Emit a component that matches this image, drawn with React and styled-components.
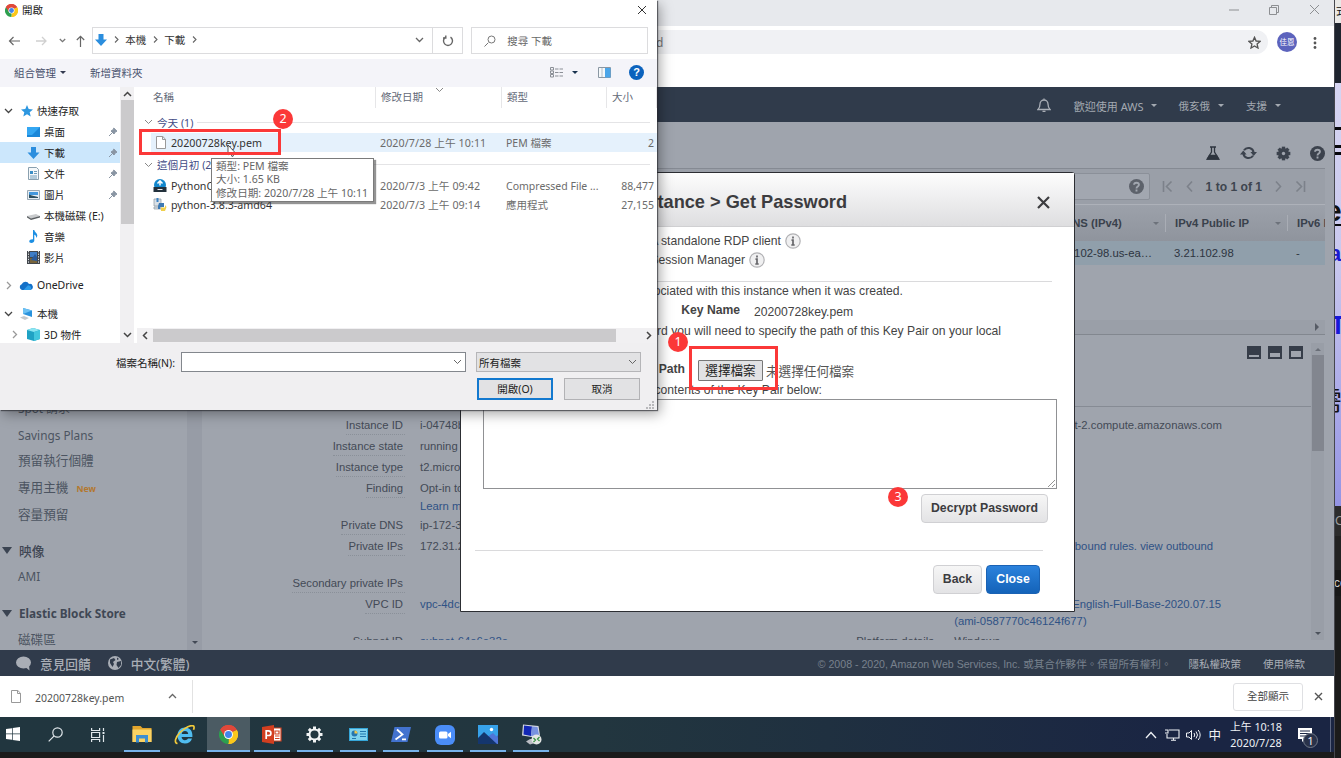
import React from "react";
import styled, { createGlobalStyle, css } from "styled-components";

const ui = '"Noto Sans", "Noto Sans CJK TC", sans-serif';
const arial = '"Liberation Sans", "Noto Sans CJK TC", sans-serif';

const Global = createGlobalStyle`
  * { box-sizing: border-box; }
  body { margin: 0; background: #1b1b1b; }
  svg { display: block; flex: none; }
`;

const Desktop = styled.div`
  position: relative;
  width: 1341px;
  height: 758px;
  overflow: hidden;
  display: flex;
  background: #1b1b1b;
  font-family: ${ui};
  font-size: 10.5px;
  color: #222;
  white-space: nowrap;
`;
const Gap = styled.div`
  flex: none;
  width: ${p => p.$w || 0}px;
  height: ${p => p.$h || 0}px;
`;
const Grow = styled.div`flex: 1;`;

/* ---------- browser window ---------- */
const Browser = styled.div`
  width: 1334px;
  height: 752px;
  flex: none;
  display: flex;
  flex-direction: column;
`;
const TitleBar = styled.div`
  height: 26px;
  background: #e7e9ed;
  display: flex;
  align-items: flex-start;
  justify-content: flex-end;
  gap: 30px;
  padding: 4px 14px 0 0;
`;
const AddressRow = styled.div`
  height: 61px;
  background: #fff;
  display: flex;
  align-items: flex-start;
  padding: 4px 13px 0 0;
`;
const AddressPill = styled.div`
  flex: 1;
  height: 24px;
  border-radius: 0 12px 12px 0;
  background: #f0f1f4;
  display: flex;
  align-items: center;
  justify-content: space-between;
  padding: 0 7px 0 656px;
  font-size: 12px;
  color: #777;
`;
const Avatar = styled.div`
  width: 20px;
  height: 20px;
  border-radius: 50%;
  margin: 2px 16px 0 9px;
  background: #5c63bd;
  color: #fff;
  font-size: 7.5px;
  line-height: 20px;
  text-align: center;
`;
const KebabBox = styled.div`padding-top: 7px;`;

const AwsNav = styled.div`
  height: 35px;
  background: #303b4b;
  display: flex;
  align-items: center;
  justify-content: flex-end;
  padding: 2px 53px 0 0;
  color: #a3a9b1;
`;
const NavItem = styled.div`
  display: flex;
  align-items: center;
  gap: ${p => p.$gap || 8}px;
  margin-left: ${p => p.$ml}px;
  font-size: ${p => p.$fs || 10.5}px;
`;
const Triangle = styled.span`
  flex: none;
  width: 0;
  height: 0;
  border: ${p => p.$s || 3.5}px solid transparent;
  border-top-color: ${p => p.$c || "#a3a9b1"};
  border-bottom-width: 0;
  ${p => p.$tall && css`border-top-width: ${p.$tall}px;`}
  ${p => p.$up && css`transform: rotate(180deg);`}
  ${p => p.$right && css`transform: rotate(-90deg);`}
`;

const Console = styled.div`
  height: 528px;
  background: #9fa4ad;
  display: flex;
`;
const AwsSide = styled.div`
  width: 187px;
  padding-top: 273px;
  display: flex;
  flex-direction: column;
  overflow: hidden;
  font-size: 11.8px;
  color: #4c5461;
`;
const SideLink = styled.div`
  flex: none;
  height: ${p => p.$h || 27}px;
  line-height: ${p => p.$h || 27}px;
  padding-left: 18px;
  font-size: ${p => (p.$cjk ? 12.6 : 11.8)}px;
`;
const NewTag = styled.span`
  margin-left: 8px;
  font-size: 8.7px;
  font-weight: 700;
  color: #b3782f;
  vertical-align: 0.5px;
`;
const SideHead = styled.div`
  flex: none;
  height: 26px;
  display: flex;
  align-items: center;
  gap: 7px;
  padding-left: 2px;
  font-size: ${p => (p.$cjk ? 12.8 : 11.75)}px;
  font-weight: ${p => (p.$cjk ? 500 : 700)};
  color: #3f4754;
`;
const SideScroll = styled.div`
  width: 15px;
  background: #979ca6;
  display: flex;
  align-items: flex-end;
  justify-content: center;
  padding-bottom: 6px;
`;
const AwsMain = styled.div`
  width: 1132px;
  padding-right: 9px;
  display: flex;
  flex-direction: column;
  font-family: ${arial};
  color: #3a414c;
`;
const ActionRow = styled.div`
  height: 46px;
  display: flex;
  justify-content: flex-end;
  align-items: center;
  padding-top: 16px;
  gap: 19px;
  color: #3c424d;
  svg:first-child { margin-right: 1px; }
`;
const FilterRow = styled.div`
  height: 36px;
  border-top: 1px solid #858a93;
  background: #9a9fa8;
  display: flex;
  align-items: center;
  justify-content: flex-end;
  padding-right: 19px;
  color: #7c818a;
`;
const FilterBox = styled.div`
  width: 300px;
  height: 27px;
  border: 1px solid #8b9099;
  border-radius: 2px;
  background: #a2a7b0;
  display: flex;
  align-items: center;
  justify-content: flex-end;
  padding-right: 5px;
  margin-right: 12px;
  color: #5d626b;
`;
const PageText = styled.span`
  margin: 0 13px 0 13px;
  font-size: 12.1px;
  font-weight: 700;
  color: #3e454f;
`;
const HeadRow = styled.div`
  height: 37px;
  border-top: 1px solid #adb1b9;
  background: linear-gradient(#9ca1aa, #8f949d);
  display: flex;
  align-items: center;
  justify-content: flex-end;
  font-size: 11.3px;
  font-weight: 700;
`;
const HeadCell = styled.div`
  width: ${p => p.$w}px;
  height: ${p => (p.$w < 50 ? 16 : 18)}px;
  overflow: hidden;
  display: flex;
  align-items: center;
  justify-content: space-between;
  padding: 0 ${p => (p.$w < 50 ? 0 : 6)}px 0 ${p => p.$pl || 9}px;
  border-left: 1px solid #a9adb5;
`;
const DataRow = styled.div`
  height: 24px;
  background: #909fab;
  display: flex;
  align-items: center;
  justify-content: flex-end;
  font-size: 11.3px;
  color: #2d3440;
`;
const DataCell = styled.div`
  width: ${p => p.$w}px;
  padding-left: ${p => p.$pl || 9}px;
  padding-right: ${p => p.$pr || 0}px;
  text-align: ${p => (p.$right ? "right" : "left")};
`;
const GridBlank = styled.div`height: 55px;`;
const GridScroll = styled.div`
  height: 15px;
  border-bottom: 1px solid #82878f;
  background: #9a9fa8;
  display: flex;
  align-items: center;
  justify-content: flex-end;
  padding-right: 4px;
`;
const Detail = styled.div`
  height: 305px;
  padding-top: 8px;
  display: flex;
`;
const DetailMain = styled.div`
  width: 1109px;
  height: 297px;
  overflow: hidden;
`;
const PaneTools = styled.div`
  height: 64px;
  border-bottom: 1px solid #868b94;
  display: flex;
  justify-content: flex-end;
  gap: 7px;
  padding: 3px 8px 0 0;
`;
const PaneIcon = styled.div`
  width: 14px;
  height: 13px;
  background: #363d49;
  padding: ${p => p.$t}px 2px 2px;
  &::after {
    content: "";
    display: block;
    height: 100%;
    background: #9fa4ad;
  }
`;
const PaneScroll = styled.div`
  width: 13px;
  height: 297px;
  background: #999ea7;
  display: flex;
  flex-direction: column;
  align-items: center;
  justify-content: space-between;
  padding: 5px 0 5px;
`;
const PaneThumb = styled.div`
  width: 12px;
  height: 96px;
  background: #82868f;
  margin: 4px 0 auto;
`;
const Columns = styled.div`
  display: flex;
  padding-top: 8px;
  font-size: 11.3px;
  color: #434a56;
`;
const Column = styled.div`width: ${p => p.$w}px;`;
const Field = styled.div`
  height: ${p => p.$h || 21}px;
  line-height: ${p => p.$h || 21}px;
  display: flex;
`;
const Label = styled.div`
  width: ${p => p.$w}px;
  display: flex;
  justify-content: flex-end;
  span { border-bottom: 1px dotted #8a9099; height: 20px; padding-right: 2px; margin-right: -2px; }
`;
const Value = styled.div`
  padding-left: 17px;
  color: ${p => (p.$link ? "#2f5285" : "inherit")};
`;
const EndText = styled.div`
  width: ${p => p.$w}px;
  text-align: right;
  color: ${p => (p.$link ? "#2f5285" : "inherit")};
`;

const AwsFooter = styled.div`
  height: 26px;
  background: #303b4b;
  display: flex;
  align-items: center;
  padding: 0 29px 0 16px;
  color: #a9aeb6;
`;
const FootStrong = styled.span`
  margin: 0 17px 0 9px;
  font-size: 12.7px;
  font-weight: 500;
`;
const Copyright = styled.span`
  color: #78818d;
  font-family: ${arial};
  font-size: 10.6px;
`;
const FootLink = styled.span`margin-left: ${p => p.$ml}px;`;

const Downloads = styled.div`
  height: 41px;
  background: #fff;
  display: flex;
  align-items: center;
  padding-right: 11px;
`;
const DownloadItem = styled.div`
  width: 193px;
  height: 33px;
  display: flex;
  align-items: center;
  padding: 3px 15px 0 11px;
  border-right: 1px solid #e2e2e2;
  color: #555;
  svg:first-child { margin: -4px 14px 0 0; }
  svg:last-child { margin: -4px 0 0 auto; }
`;
const ShowAll = styled.div`
  width: 70px;
  height: 28px;
  margin-right: 11px;
  border: 1px solid #dfe0e3;
  border-radius: 3px;
  line-height: 25px;
  text-align: center;
  color: #444;
`;

const Taskbar = styled.div`
  height: 35px;
  display: flex;
  background: linear-gradient(90deg, #21363f 0%, #22363f 45%, #1f3040 62%, #1a2543 88%);
`;
const StartCell = styled.div`
  width: 33.4px;
  padding: 10px 0 0 6px;
`;
const Task = styled.div`
  width: 43.3px;
  display: flex;
  flex-direction: column;
  align-items: center;
  justify-content: space-between;
  background: ${p => (p.$active ? "#4b5b63" : "transparent")};
  &::after {
    content: "";
    width: ${p => (p.$active ? 43 : 36)}px;
    height: 2px;
    background: ${p => (p.$open ? "#76b2ea" : "transparent")};
  }
`;
const TaskIcon = styled.div`
  height: 33px;
  padding-top: 2px;
  display: flex;
  align-items: center;
`;
const Tray = styled.div`
  margin-left: auto;
  display: flex;
  align-items: center;
  color: #eef1f5;
`;
const Ime = styled.span`font-size: 12.5px; margin: 0 8px 0 7px;`;
const Clock = styled.div`
  width: 54px;
  font-size: 10.8px;
  line-height: 16px;
  text-align: center;
  margin-right: 15px;
`;
const NoticeCount = styled.div`
  position: absolute;
  right: -6px;
  bottom: -6px;
  width: 15px;
  height: 15px;
  border-radius: 50%;
  border: 1px solid #707887;
  background: #29324a;
  font-size: 11.5px;
  line-height: 13px;
  text-align: center;
`;
const NoticeBox = styled.div`position: relative; margin-right: 18px;`;
const ShowDesktop = styled.div`width: 4px; height: 35px; border-left: 1px solid #5b6580;`;

/* ---------- slice of the window behind ---------- */
const Behind = styled.div`
  width: 7px;
  height: 758px;
  overflow: hidden;
  border-left: 1px solid #45464d;
  display: flex;
  flex-direction: column;
  background: linear-gradient(#d6d5f2 83px, #c9c8ee 260px, #9494e4 505px);
`;
const Piece = styled.div`
  flex: none;
  height: ${p => p.$h}px;
  background: ${p => p.$bg || "transparent"};
  color: ${p => p.$c || "#111"};
  font: ${p => p.$f || "12px"} ${arial};
  line-height: ${p => p.$h}px;
  text-indent: ${p => p.$i || 0}px;
  overflow: hidden;
`;

/* ---------- get password modal ---------- */
const Modal = styled.div`
  position: absolute;
  left: 460px;
  top: 172px;
  width: 615px;
  height: 440px;
  border: 1px solid #2c2e33;
  border-radius: 3px 3px 0 0;
  background: #fff;
  font-family: ${arial};
  font-size: 12.17px;
  color: #444;
  display: flex;
  flex-direction: column;
`;
const ModalHead = styled.div`
  flex: none;
  height: 54px;
  background: linear-gradient(#fdfdfd, #dedee0);
  border-bottom: 1px solid #d0d0d2;
  display: flex;
  align-items: center;
  padding: 5px 24px 0 0;
  font-size: 18.2px;
  font-weight: 700;
  color: #3c3c3f;
  justify-content: space-between;
`;
const ModalTitle = styled.div`width: 386px; text-align: right;`;
const Line = styled.div`
  flex: none;
  height: ${p => p.$h}px;
  line-height: ${p => p.$h}px;
  width: ${p => p.$end}px;
  display: flex;
  align-items: center;
  justify-content: flex-end;
`;
const InfoIcon = styled.svg`margin: -1px 0 0 4px;`;
const Rule = styled.div`
  flex: none;
  height: 1px;
  margin: 0 ${p => p.$r}px 0 14px;
  background: #dadadc;
`;
const FormRow = styled.div`
  flex: none;
  height: ${p => p.$h}px;
  display: flex;
  align-items: center;
`;
const FormLabel = styled.div`
  width: ${p => p.$w}px;
  text-align: right;
  font-weight: 700;
  margin-top: -3px;
`;
const FileButton = styled.div`
  width: 65px;
  height: 21px;
  margin: 0 3px 0 13px;
  border: 1px solid #777;
  border-radius: 1px;
  background: #e2e2e4;
  color: #222;
  text-align: center;
  line-height: 20px;
  font-size: 12.6px;
`;
const FileNone = styled.span`font-size: 12.6px; color: #555;`;
const TextArea = styled.div`
  flex: none;
  width: 574px;
  height: 90px;
  margin-left: 22px;
  border: 1px solid #909194;
  display: flex;
  align-items: flex-end;
  justify-content: flex-end;
`;
const ButtonRow = styled.div`
  flex: none;
  display: flex;
  justify-content: flex-end;
  gap: 4px;
  padding-right: ${p => p.$r}px;
`;
const AwsButton = styled.div`
  width: ${p => p.$w}px;
  height: 29px;
  border-radius: 4px;
  border: 1px solid ${p => (p.$primary ? "#1a62b4" : "#d0d0d3")};
  background: ${p => (p.$primary ? "linear-gradient(#2b82dc, #1463b9)" : "linear-gradient(#f6f6f6, #e3e3e5)")};
  color: ${p => (p.$primary ? "#fff" : "#3c3c3f")};
  font-weight: 700;
  font-size: 12.27px;
  line-height: 27px;
  text-align: center;
`;

/* ---------- file open dialog ---------- */
const Dialog = styled.div`
  position: absolute;
  left: 0;
  top: 0;
  width: 657px;
  height: 410px;
  background: #fff;
  box-shadow: 1px 1px 1px rgba(40, 42, 48, 0.65), 3px 4px 12px rgba(0, 0, 0, 0.35);
  display: flex;
  flex-direction: column;
`;
const DialogTitle = styled.div`
  height: 26px;
  display: flex;
  align-items: flex-start;
  justify-content: space-between;
  padding: 2px 10px 0 5px;
  color: #222;
`;
const TitleLabel = styled.div`
  display: flex;
  align-items: center;
  gap: 4px;
  height: 16px;
  span { margin-top: -1px; }
`;
const NavRow = styled.div`
  height: 33px;
  display: flex;
  padding: 1px 9px 5px 8px;
`;
const NavArrows = styled.div`
  width: 84px;
  display: flex;
  align-items: center;
`;
const PathBox = styled.div`
  width: 342px;
  border: 1px solid #dcdcde;
  display: flex;
  align-items: center;
  padding: 0 8px 2px 2px;
  color: #333;
  svg + span, span + svg { margin-left: 6.5px; }
`;
const RefreshBox = styled.div`
  width: 30px;
  border: 1px solid #dcdcde;
  border-left: 0;
  display: flex;
  align-items: center;
  justify-content: center;
`;
const SearchBox = styled.div`
  width: 177px;
  margin-left: 8px;
  border: 1px solid #dcdcde;
  display: flex;
  align-items: center;
  gap: 11px;
  padding-left: 12px;
  color: #686868;
`;
const ToolRow = styled.div`
  height: 28px;
  background: #f4f4f9;
  display: flex;
  align-items: center;
  padding: 0 13px 2px 14px;
  color: #47506c;
`;
const HelpDot = styled.div`
  width: 15px;
  height: 15px;
  border-radius: 50%;
  background: #0b62bd;
  color: #fff;
  font: 700 11px/15px ${arial};
  text-align: center;
`;
const DialogBody = styled.div`
  height: 256px;
  display: flex;
`;
const Tree = styled.div`
  width: 120px;
  padding-top: 13px;
  overflow: hidden;
`;
const TreeRow = styled.div`
  height: 21px;
  display: flex;
  align-items: center;
  padding: 0 2px 0 ${p => p.$pl}px;
  background: ${p => (p.$on ? "#cce7fc" : "transparent")};
  color: #222;
  span { margin: -1px 0 0 4px; }
  svg:last-child:not(:first-child) { margin-left: auto; }
`;
const Chev = styled.div`width: ${p => p.$w}px; display: flex;`;
const VScroll = styled.div`
  width: 14px;
  background: #f1f0f2;
  display: flex;
  flex-direction: column;
  align-items: center;
  justify-content: space-between;
  padding: 4px 0 5px;
`;
const VThumb = styled.div`
  width: 13px;
  height: 124px;
  margin: 3px 0 auto;
  background: #cbcacc;
`;
const List = styled.div`
  width: 520px;
  margin-left: 3px;
  display: flex;
  flex-direction: column;
`;
const ListHead = styled.div`
  height: 21px;
  display: flex;
  color: #646a78;
`;
const ColHead = styled.div`
  width: ${p => p.$w}px;
  padding-left: ${p => p.$pl || 5}px;
  line-height: 20px;
  border-right: 1px solid #e6e6e8;
  display: flex;
`;
const SortMark = styled.div`padding: 0 0 0 12px;`;
const Group = styled.div`
  height: ${p => p.$h}px;
  display: flex;
  align-items: center;
  padding: 0 7px 0 7px;
  gap: 4px;
  color: #424c86;
  font-size: 10.6px;
  &::after { content: ""; flex: 1; height: 1px; background: #e4e4e6; }
`;
const FileRow = styled.div`
  height: 19px;
  margin-left: 14px;
  padding-left: 2px;
  display: flex;
  align-items: center;
  background: ${p => (p.$on ? "#e5f1fc" : "transparent")};
  color: #6b6b6b;
`;
const FileName = styled.div`
  width: 227px;
  display: flex;
  align-items: center;
  gap: 4px;
  font-size: 10.7px;
  color: #333;
`;
const DocSlot = styled.div`margin: 0 1px 0 3px;`;
const FileCell = styled.div`
  width: ${p => p.$w}px;
  text-align: ${p => (p.$right ? "right" : "left")};
  ${p => p.$date && css`font-size: 10.7px; letter-spacing: 0.07px;`}
`;
const HScroll = styled.div`
  height: 15px;
  margin-top: auto;
  background: #f1f0f2;
  display: flex;
  align-items: center;
  padding: 0 5px;
`;
const HThumb = styled.div`
  width: 463px;
  height: 13px;
  margin: 0 auto 0 5px;
  background: #cbcacc;
`;
const DialogFoot = styled.div`
  flex: 1;
  background: #f0eff1;
  padding: 9px 3px 0 0;
`;
const FootLine = styled.div`
  display: flex;
  align-items: center;
  justify-content: flex-end;
  padding-right: ${p => p.$r}px;
  margin-bottom: ${p => p.$mb || 0}px;
`;
const Combo = styled.div`
  width: ${p => p.$w}px;
  height: 20px;
  margin-left: ${p => p.$ml}px;
  border: 1px solid ${p => (p.$grey ? "#b5b5b8" : "#83878d")};
  background: ${p => (p.$grey ? "#e2e2e4" : "#fff")};
  display: flex;
  align-items: center;
  justify-content: space-between;
  padding: 0 3px 0 2px;
`;
const DlgButton = styled.div`
  width: 76px;
  height: 22px;
  margin-left: 11px;
  border: ${p => (p.$main ? "2px solid #1379cf" : "1px solid #b2b2b5")};
  background: #e2e2e4;
  text-align: center;
  line-height: ${p => (p.$main ? 18 : 20)}px;
`;
const GripLine = styled.div`display: flex; justify-content: flex-end;`;
const Tooltip = styled.div`
  position: absolute;
  left: 211px;
  top: 158px;
  width: 163px;
  height: 44px;
  padding: 1px 4px;
  border: 1px solid #7b7b7b;
  box-shadow: 2px 2px 1px rgba(60, 60, 60, 0.55);
  background: #fff;
  font-size: 10.6px;
  line-height: 13.3px;
  color: #666;
`;
const Pointer = styled.div`position: absolute; left: 227px; top: 144px;`;

/* ---------- annotations ---------- */
const Mark = styled.div`
  position: absolute;
  left: ${p => p.$x}px;
  top: ${p => p.$y}px;
  width: ${p => p.$w}px;
  height: ${p => p.$h}px;
  border: 3px solid #fb3838;
`;
const Badge = styled.div`
  position: absolute;
  left: ${p => p.$x}px;
  top: ${p => p.$y}px;
  width: 20px;
  height: 20px;
  border-radius: 50%;
  background: #fb3838;
  color: #fff;
  font: 12.5px/20px ${ui};
  text-align: center;
`;

/* ---------- icons ---------- */
const Stroke = ({ w = 10, h = 10, d, c = "#555", s = 1.3 }) => (
  <svg width={w} height={h} viewBox={`0 0 ${w} ${h}`} fill="none" stroke={c} strokeWidth={s}><path d={d} /></svg>
);
const Down = p => <Stroke w={9} h={6} d="M1 1 4.5 4.5 8 1" {...p} />;
const Up = p => <Stroke w={9} h={6} d="M1 5 4.5 1.5 8 5" {...p} />;
const Right = p => <Stroke w={6} h={9} d="M1 1 4.5 4.5 1 8" {...p} />;
const Left = p => <Stroke w={6} h={9} d="M5 1 1.5 4.5 5 8" {...p} />;
const Crumb = () => <Stroke w={5} h={9} c="#666" d="M1 1.500 4 4.500 1 7.500" s={1.1} />;
const Cross = ({ z = 11, ...p }) => <Stroke w={z} h={z} d={`M1 1 ${z - 1} ${z - 1}M${z - 1} 1 1 ${z - 1}`} {...p} />;
const Info = () => (
  <InfoIcon width="16" height="16" viewBox="0 0 16 16">
    <circle cx="8" cy="8" r="7.200" fill="#f0f0f1" stroke="#b2b2b5" strokeWidth="1.200" />
    <path d="M8 3.500v2M6.500 7.200H8v4.300M6.300 12h3.400" fill="none" stroke="#66666a" strokeWidth="1.700" />
  </InfoIcon>
);

const Chrome = ({ z }) => (
  <svg width={z} height={z} viewBox="0 0 24 24">
    <path d="M12 12 1.6 6A12 12 0 0 1 22.4 6Z" fill="#e0483a" />
    <path d="M12 12 22.4 6A12 12 0 0 1 12 24Z" fill="#fbc71b" />
    <path d="M12 12 12 24A12 12 0 0 1 1.6 6Z" fill="#2d9f4f" />
    <path d="M12 6.5H22.6A12 12 0 0 0 1.6 6L7.3 14.7Z" fill="#e0483a" />
    <path d="M16.8 9.3 22.7 6.5A12 12 0 0 1 11.6 24L16.8 14.7Z" fill="#fbc71b" />
    <circle cx="12" cy="12" r="5.6" fill="#fff" />
    <circle cx="12" cy="12" r="4.4" fill="#4385ea" />
  </svg>
);
const BlueDown = () => (
  <svg width="12" height="12" viewBox="0 0 12 12"><path d="M3.5 0h5v5.5H12L6 12 0 5.5h3.5Z" fill="#2b8ede" /></svg>
);
const Doc = ({ w = 10, h = 13 }) => (
  <svg width={w} height={h} viewBox="0 0 10 13" fill="#fff" stroke="#999"><path d="M.5.5h6.300l2.700 2.700v9.300h-9Z M6.500.5v3h3" /></svg>
);
const Pin = () => (
  <svg width="10" height="10" viewBox="0 0 10 10" fill="#8995a3" stroke="#8995a3"><path d="M5.800 1 9 4.200 7.500 4.700 6 7 3 4 5.300 2.500ZM4 6 1 9" /></svg>
);
const treeIcons = {
  star: <svg width="12" height="12" viewBox="0 0 12 12"><path d="M6 0 7.700 4 12 4.400 8.700 7.200 9.700 11.600 6 9.300 2.300 11.600 3.300 7.200 0 4.400 4.300 4Z" fill="#2d97e0" /></svg>,
  desk: <svg width="13" height="10" viewBox="0 0 13 10"><path d="M0 0h13v10H0Z" fill="#1b87d8" /><path d="M0 0h13L5 8H0Z" fill="#35a7f2" /></svg>,
  down: <svg width="13" height="12" viewBox="0 0 13 12"><path d="M4 0h5v5.500h3.500L6.500 12 .500 5.500H4Z" fill="#2b8ede" /></svg>,
  doc: <svg width="13" height="13" viewBox="0 0 13 13"><path d="M1.500.5h8l2 2v10h-10Z" fill="#f5f8fa" stroke="#8aa0af" /><path d="M3 4h3v3H3Z" fill="#3b8ec6" /><path d="M7 4.500h3M7 6.500h3M3 9h7M3 11h7" stroke="#6f9cba" /></svg>,
  pic: <svg width="13" height="10" viewBox="0 0 13 10"><path d="M.5.5h12v9H.5Z" fill="#e6eef4" stroke="#9aa9b4" /><path d="M2 2h9v3H2Z" fill="#4398dd" /><path d="M2 8V4.500l3 1 6 1.500v1Z" fill="#2d4f5f" /></svg>,
  disk: <svg width="13" height="8" viewBox="0 0 13 8"><path d="M0 4 9 2l4 2-9 3Z" fill="#c9cbcd" /><path d="M0 4v1.500L4 8l9-2.500V4L4 6.500Z" fill="#5b5f62" /></svg>,
  note: <svg width="13" height="13" viewBox="0 0 13 13"><path d="M6 0h1.300c.3 2.300 3 3 3 5.500 0 1-.4 1.800-1 2.500.2-2-1-3-2-3.300V10.500C7.300 12 6 13 4.500 13S2 12.200 2.300 11 4.500 9 6 9.400Z" fill="#1c8fe3" /></svg>,
  film: <svg width="13" height="13" viewBox="0 0 13 13"><path d="M0 0h13v13H0Z" fill="#42474d" /><path d="M3 1h7v5H3Z" fill="#3f7ec7" /><path d="M3 7h7v5H3Z" fill="#77633a" /><path d="M4 9 8 3l2 3v4Z" fill="#2b5c9c" /><path d="M1.500 0v13M11.500 0v13" stroke="#dfe3e6" strokeDasharray="1.300 1.300" /></svg>,
  cloud: <svg width="14" height="9" viewBox="0 0 14 9"><path d="M3 9a3 3 0 0 1-.3-5.700A4 4 0 0 1 10 3a3 3 0 0 1 1.500 6Z" fill="#1370c8" /><path d="M4.500 9 9 4.200A3 3 0 0 1 11.500 9Z" fill="#2d9cea" /></svg>,
  pc: <svg width="13" height="12" viewBox="0 0 13 12"><path d="M3 0l9 2.500V9L3 6Z" fill="#2a93dd" /><path d="M3 0l9 2.500L3 6Z" fill="#6cc1f3" /><path d="M0 9.500 4 8l5 2-4 2Z" fill="#c4c9cd" /></svg>,
  cube: <svg width="13" height="13" viewBox="0 0 13 13"><path d="M0 2 6 0l7 2v9l-6 2-7-2Z" fill="#1fa2c4" /><path d="M0 2 6 0l7 2-6 2Z" fill="#8be6f2" /><path d="M7 4l6-2v9l-6 2Z" fill="#42c6dd" /></svg>
};
const Question = ({ z = 15, bg = "#9a9fa8" }) => (
  <svg width={z} height={z} viewBox="0 0 16 16"><circle cx="8" cy="8" r="8" fill="currentColor" /><path d="M5.400 6.200C5.400 3.200 10.600 3.200 10.600 6.200 10.600 8 8 8 8 10M8 11.200v2" fill="none" stroke={bg} strokeWidth="2" /></svg>
);
const Flask = () => (
  <svg width="14" height="14" viewBox="0 0 14 14" fill="none" stroke="#2e353f" strokeWidth="1.300"><path d="M4 1h6M5.500 1v5L1.200 13h11.600L8.500 6V1" /><path d="M3.500 9.500h7l2 3.500h-11Z" fill="#2e353f" /></svg>
);
const Refresh = () => (
  <svg width="17" height="14" viewBox="0 0 17 14"><path d="M4 4.200A5.300 5.300 0 0 1 13.600 6.500M13 9.800A5.300 5.300 0 0 1 3.400 7.500" fill="none" stroke="#3c434e" strokeWidth="2" /><path d="M0 8.500 3.300 4.500 6.600 8.500ZM10.400 6 13.700 10l3.300-4Z" fill="#3c434e" /></svg>
);
const Gear = () => (
  <svg width="15" height="15" viewBox="-8 -8 16 16"><g fill="#3c434e"><circle r="5.800" />{[0, 45, 90, 135].map(a => <rect key={a} x="-1.800" y="-7.300" width="3.600" height="14.600" transform={`rotate(${a})`} />)}</g><circle r="1.800" fill="#9fa4ad" /></svg>
);
const Bell = () => (
  <svg width="14" height="15" viewBox="0 0 14 15" fill="none" stroke="#a9aeb6" strokeWidth="1.300"><path d="M1 11.500C3 9.500 3 8 3 6a4 4 0 0 1 8 0c0 2 0 3.500 2 5.500ZM7 2V.5M5.500 13.300h3" /></svg>
);

const taskIcons = [
  [<svg width="15" height="15" viewBox="0 0 15 15" fill="none" stroke="#dfe6ea" strokeWidth="1.200"><circle cx="9.500" cy="5.500" r="4.700" /><path d="M6.200 8.800.7 14.300" /></svg>],
  [<svg width="14" height="14" viewBox="0 0 14 14" fill="none" stroke="#dfe6ea" strokeWidth="1.200"><path d="M.6 0v2.500h8V0M.6 14v-2.500h8V14M.6 4.500h8v5h-8ZM12.500 0v3M12.500 7v7" /><path d="M11.500 4h2v2h-2Z" fill="#dfe6ea" stroke="none" /></svg>],
  [<svg width="20" height="17" viewBox="0 0 20 17"><path d="M.5 0h8l2 2H19.500v14H.5Z" fill="#e2a52c" /><path d="M.5 3.500h19V16H.5Z" fill="#fad364" /><path d="M4 16.500V9h12v7.500h-3V12.500H7v4Z" fill="#3c8fd2" /></svg>, 1],
  [<svg width="22" height="20" viewBox="0 0 22 20"><path d="M11 2.500c-4.500 0-7.500 3.500-7.500 8s3 8 7.500 8c3.500 0 6-1.800 7-5h-4c-.7 1.200-1.600 1.700-3 1.700-2 0-3.300-1.200-3.400-3.200h10.800C18.800 6 16 2.500 11 2.500ZM7.700 9c.2-1.800 1.500-2.900 3.300-2.900S14.100 7.200 14.200 9Z" fill="#50bdf0" /><path d="M3.500 18.500C0 18 1 12.500 6 7.500 11 2.500 17.500-.5 19.500 1c1 .8.500 2.500 0 3.800" fill="none" stroke="#f3cb3b" strokeWidth="1.700" /></svg>],
  [<Chrome z={19} />, 1, 1],
  [<svg width="20" height="19" viewBox="0 0 20 19"><path d="M9 3h10v13H9Z" fill="#fff" stroke="#d04423" strokeWidth="1.200" /><path d="M13 6h4v3h-4ZM13 11h4.500M13 13.500h4.500" stroke="#d04423" fill="none" strokeWidth="1.200" /><path d="M0 2 12 0v19L0 17Z" fill="#d23f20" /><path d="M4.200 14V5.800h2.300c3.200 0 3.200 4.700 0 4.700H4.500" fill="none" stroke="#fff" strokeWidth="1.700" /></svg>, 1],
  [<svg width="17" height="17" viewBox="-8.500 -8.500 17 17"><g fill="#f2f4f5">{[0, 45, 90, 135].map(a => <rect key={a} x="-1.500" y="-8" width="3" height="16" transform={`rotate(${a})`} />)}<circle r="6" /></g><circle r="4" fill="#21363f" /></svg>, 1],
  [<svg width="19" height="13" viewBox="0 0 19 13"><path d="M0 0h19v13H0Z" fill="#35a6d8" /><path d="M1 1h17v11H1Z" fill="#7fd2ee" /><circle cx="5.500" cy="5.500" r="3" fill="#2476b0" /><path d="M5.500 2.500v3h3a3 3 0 0 0-3-3Z" fill="#f0c64a" /><path d="M11 3.500h6M11 6h6M11 8.500h6M3 10.500h4" stroke="#2378ad" /></svg>, 1],
  [<svg width="20" height="15" viewBox="0 0 20 15"><path d="M3.500 0H20l-3.500 15H0Z" fill="#4272cf" /><path d="M6 2.500 11.500 7.500 4.500 12.500M11 12.300h4" fill="none" stroke="#fff" strokeWidth="1.800" /></svg>, 1],
  [<svg width="20" height="20" viewBox="0 0 20 20"><rect width="20" height="20" rx="6" fill="#4a8df8" /><rect x="4" y="6.500" width="8.500" height="7" rx="1.500" fill="#fff" /><path d="M13 9l3-2.300v6.600L13 11Z" fill="#fff" /></svg>, 1],
  [<svg width="20" height="19" viewBox="0 0 20 19"><path d="M0 0h20v19H0Z" fill="#37a2ea" /><path d="M12 19 20 10v9Z" fill="#4868c8" /><path d="M9 12l6-4 5 5v6H9Z" fill="#4f75d8" /><path d="M0 13 6 7l13 12H0Z" fill="#14366e" /><circle cx="13.500" cy="4.500" r="1.700" fill="#fff" /></svg>, 1],
  [<svg width="21" height="21" viewBox="0 0 21 21"><path d="M2 .5 17.500 2 19 11.500 14 13.500 1 11.500Z" fill="#d7dae2" /><path d="M3 1.500 11 2.500 10 12 2.500 10.500Z" fill="#1227b4" /><path d="M11 2.500 16.500 3 18 11 10 12Z" fill="#7892e0" /><path d="M5 17.500 9 15h5v4l-5 1.500Z" fill="#b9bcc3" /><circle cx="15.500" cy="15.500" r="5" fill="#e4e6e4" /><path d="M12.500 14 14.500 16 12.500 18M18.500 13 16.500 15 18.500 17" fill="none" stroke="#369142" strokeWidth="1.200" /></svg>, 1]
];

const tree = [
  ["star", "快速存取"], ["desk", "桌面", 1], ["down", "下載", 1, 1], ["doc", "文件", 1], ["pic", "圖片", 1],
  ["disk", "本機磁碟 (E:)"], ["note", "音樂"], ["film", "影片"]
];
const leftFields = [
  ["Instance ID", "i-04748b0"], ["Instance state", "running"], ["Instance type", "t2.micro"], ["Finding", "Opt-in to"]
];

function FileDialog() {
  return (
    <Dialog>
      <DialogTitle>
        <TitleLabel><Chrome z={13} /><span>開啟</span></TitleLabel>
        <TitleLabel><Cross z={10} c="#333" s={1} /></TitleLabel>
      </DialogTitle>
      <NavRow>
        <NavArrows>
          <Stroke w={12} h={10} d="M12 5H1.500M5.500 1 1.500 5 5.500 9" c="#666" s={1.2} />
          <Gap $w={16} />
          <Stroke w={11} h={10} d="M0 5H10M6 1 10 5 6 9" c="#d0d0d0" />
          <Gap $w={12} />
          <Down w={7} c="#777" d="M.8 1 3.500 3.700 6.200 1" />
          <Gap $w={10} />
          <Stroke w={9} h={12} d="M4.500 12V1.500M.8 5 4.500 1.300 8.200 5" c="#666" s={1.2} />
        </NavArrows>
        <PathBox>
          <BlueDown /><Gap $w={7} /><Crumb />
          <span>本機</span><Crumb />
          <span>下載</span><Crumb />
          <Grow /><Down c="#666" />
        </PathBox>
        <RefreshBox><Stroke w={12} h={12} d="M8.500 2.200A4.500 4.500 0 1 1 3.500 2.200M3.800.5v2.500H1" s={1.4} c="#666" /></RefreshBox>
        <SearchBox>
          <Stroke w={12} h={12} d="M4.300 7.700.5 11.500M7.500 1a3.500 3.500 0 1 1 0 7 3.500 3.500 0 1 1 0-7" s={1} c="#777" />
          <span>搜尋 下載</span>
        </SearchBox>
      </NavRow>
      <ToolRow>
        <span>組合管理</span><Gap $w={4} /><Triangle $s={3} $c="#333a50" /><Gap $w={24} />
        <span>新增資料夾</span><Grow />
        <svg width="13" height="11" viewBox="0 0 13 11" stroke="#8b8f96" fill="none"><path d="M.5.500h3v2.500h-3ZM.5 4h3v2.500h-3ZM.5 7.500h3v2.500h-3ZM5 2h3.500M9.500 2H13M5 5.500h3.500M9.500 5.500H13M5 9h3.500M9.500 9H13" /></svg>
        <Gap $w={9} /><Triangle $s={3} $c="#18324f" /><Gap $w={20} />
        <svg width="13" height="11" viewBox="0 0 13 11"><path d="M.5.500h12v10H.5Z" fill="#f5f8fa" stroke="#8a97a3" /><path d="M7 1h5.500v9.500H7Z" fill="#4ba5e8" /><path d="M4 1v9" stroke="#b5bec6" /></svg>
        <Gap $w={18} /><HelpDot>?</HelpDot>
      </ToolRow>
      <DialogBody>
        <Tree>
          {tree.map(([icon, label, pin, on], i) => (
            <TreeRow key={label} $pl={i ? 27 : 4} $on={on}>
              {!i && <Chev $w={17}><Down c="#444" /></Chev>}
              {treeIcons[icon]}<span>{label}</span>{pin ? <Pin /> : <i />}
            </TreeRow>
          ))}
          <Gap $h={7} />
          <TreeRow $pl={6}><Chev $w={13}><Right c="#999" /></Chev>{treeIcons.cloud}<span>OneDrive</span></TreeRow>
          <Gap $h={7} />
          <TreeRow $pl={4}><Chev $w={16}><Down c="#444" /></Chev>{treeIcons.pc}<span>本機</span></TreeRow>
          <TreeRow $pl={12}><Chev $w={15}><Right c="#999" /></Chev>{treeIcons.cube}<span>3D 物件</span></TreeRow>
        </Tree>
        <VScroll><Up c="#444" s={1.5} /><VThumb /><Down c="#444" s={1.5} /></VScroll>
        <List>
          <ListHead>
            <ColHead $w={239} $pl={16}>名稱</ColHead>
            <ColHead $w={126}>修改日期<SortMark><Down c="#888" s={1} /></SortMark></ColHead>
            <ColHead $w={105}>類型</ColHead>
            <ColHead $w={50}>大小</ColHead>
          </ListHead>
          <Gap $h={3} />
          <Group $h={22}><Down c="#888" s={1} /><span>今天 (1)</span></Group>
          <FileRow $on>
            <FileName><DocSlot><Doc /></DocSlot>20200728key.pem</FileName>
            <FileCell $date $w={126}>2020/7/28 上午 10:11</FileCell>
            <FileCell $w={98}>PEM 檔案</FileCell>
            <FileCell $w={50} $right>2</FileCell>
          </FileRow>
          <Gap $h={2} />
          <Group $h={21}><Down c="#888" s={1} /><span>這個月初 (2)</span></Group>
          <Gap $h={1} />
          <FileRow>
            <FileName>
              <svg width="14" height="13" viewBox="0 0 14 13"><circle cx="7" cy="6" r="6" fill="#1287cc" /><path d="M7 1.500v5M4.500 4.500 7 1.800l2.500 2.700" fill="none" stroke="#fff" strokeWidth="1.500" /><path d="M.5 8h13v5H.5Z" fill="#23313c" /><path d="M4.500 10.500h5" stroke="#eee" /></svg>
              PythonCode
            </FileName>
            <FileCell $date $w={126}>2020/7/3 上午 09:42</FileCell>
            <FileCell $w={98}>Compressed File ...</FileCell>
            <FileCell $w={50} $right>88,477</FileCell>
          </FileRow>
          <FileRow>
            <FileName>
              <svg width="14" height="13" viewBox="0 0 14 13"><path d="M1 1h7v7H1ZM1 9h7v2H1Z" fill="#d9e0e6" stroke="#8b969e" strokeWidth=".7" /><path d="M4.500 0v4" stroke="#3b82c4" strokeWidth="2" /><path d="M6 5h5v4H7v2H5V8Z" fill="#3c79b4" /><path d="M8 9.500h4V7l1.500 2-1.500 4H8v-2Z" fill="#f0d04c" /></svg>
              python-3.8.3-amd64
            </FileName>
            <FileCell $date $w={126}>2020/7/3 上午 09:14</FileCell>
            <FileCell $w={98}>應用程式</FileCell>
            <FileCell $w={50} $right>27,155</FileCell>
          </FileRow>
          <HScroll><Left c="#444" s={1.5} /><HThumb /><Right c="#444" s={1.5} /></HScroll>
        </List>
      </DialogBody>
      <DialogFoot>
        <FootLine $mb={6} $r={13}>
          <span>檔案名稱(N):</span>
          <Combo $w={285} $ml={6}><span /><Down c="#666" s={1} /></Combo>
          <Combo $w={165} $ml={10} $grey><span>所有檔案</span><Down c="#666" s={1} /></Combo>
        </FootLine>
        <FootLine $mb={1} $r={14}>
          <DlgButton $main>開啟(O)</DlgButton>
          <DlgButton>取消</DlgButton>
        </FootLine>
        <GripLine>
          <svg width="8" height="8" viewBox="0 0 8 8" fill="#b8b8bb"><path d="M6 0h2v2H6ZM3 3h2v2H3ZM6 3h2v2H6ZM0 6h2v2H0ZM3 6h2v2H3ZM6 6h2v2H6Z" /></svg>
        </GripLine>
      </DialogFoot>
      <Tooltip>類型: PEM 檔案<br />大小: 1.65 KB<br />修改日期: 2020/7/28 上午 10:11</Tooltip>
      <Pointer><svg width="9" height="14" viewBox="0 0 9 14"><path d="M1 1v10l2.500-2 1.500 3.500 1.500-.7L5 8.500h3Z" fill="#fff" stroke="#444" strokeWidth=".9" /></svg></Pointer>
    </Dialog>
  );
}

function PasswordModal() {
  return (
    <Modal>
      <ModalHead>
        <ModalTitle>Instance &gt; Get Password</ModalTitle>
        <Cross z={13} c="#3c3c3f" s={2.2} />
      </ModalHead>
      <Gap $h={5} />
      <Line $h={19} $end={340}>A standalone RDP client<Info /></Line>
      <Line $h={19} $end={304}>Session Manager<Info /></Line>
      <Gap $h={11} />
      <Rule $r={22} />
      <Line $h={18} $end={442}>associated with this instance when it was created.</Line>
      <FormRow $h={23}><FormLabel $w={279}>Key Name</FormLabel><Gap $w={14} />20200728key.pem</FormRow>
      <Line $h={17} $end={540}>password you will need to specify the path of this Key Pair on your local</Line>
      <Gap $h={19} />
      <FormRow $h={23}>
        <FormLabel $w={224}>Key Pair Path</FormLabel>
        <FileButton>選擇檔案</FileButton>
        <FileNone>未選擇任何檔案</FileNone>
      </FormRow>
      <Line $h={17} $end={361}>contents of the Key Pair below:</Line>
      <TextArea><Stroke w={9} h={9} d="M1 8 8 1M5 8 8 5" s={0.9} c="#888" /></TextArea>
      <Gap $h={5} />
      <ButtonRow $r={26}><AwsButton $w={127}>Decrypt Password</AwsButton></ButtonRow>
      <Gap $h={27} />
      <Rule $r={31} />
      <Gap $h={14} />
      <ButtonRow $r={34}><AwsButton $w={49}>Back</AwsButton><AwsButton $w={54} $primary>Close</AwsButton></ButtonRow>
    </Modal>
  );
}

export default function App() {
  return (
    <>
      <Global />
      <Desktop>
        <Browser>
          <TitleBar>
            <Stroke w={10} h={12} d="M0 6h10" c="#8d8f92" s={1} />
            <Stroke w={10} h={12} d="M.5 3.500h7v7h-7ZM2.500 3.500V1.500h7v7H7.500" c="#8d8f92" s={1} />
            <Cross z={11} c="#8d8f92" s={1} />
          </TitleBar>
          <AddressRow>
            <AddressPill>
              <span>d</span>
              <svg width="13" height="13" viewBox="0 0 24 24" fill="none" stroke="#555" strokeWidth="2.500"><path d="M12 2.500 15 9.300l7.300.700-5.500 4.900 1.600 7.200L12 18.300 5.600 22.100l1.600-7.200L1.700 10 9 9.300Z" /></svg>
            </AddressPill>
            <Avatar>佳恩</Avatar>
            <KebabBox><svg width="4" height="12" viewBox="0 0 4 12" fill="#555"><circle cx="2" cy="1.500" r="1.400" /><circle cx="2" cy="6" r="1.400" /><circle cx="2" cy="10.500" r="1.400" /></svg></KebabBox>
            <Gap $w={4} />
          </AddressRow>
          <AwsNav>
            <Bell />
            <NavItem $ml={23} $gap={7} $fs={11}>歡迎使用 AWS<Triangle /></NavItem>
            <NavItem $ml={22}>俄亥俄<Triangle /></NavItem>
            <NavItem $ml={22}>支援<Triangle /></NavItem>
          </AwsNav>
          <Console>
            <AwsSide>
              <SideLink>Spot 請求</SideLink>
              <SideLink $h={26}>Savings Plans</SideLink>
              <SideLink $cjk $h={26}>預留執行個體</SideLink>
              <SideLink $cjk>專用主機<NewTag>New</NewTag></SideLink>
              <SideLink $cjk $h={28}>容量預留</SideLink>
              <Gap $h={8} />
              <SideHead $cjk><Triangle $s={5} $tall={7} $c="#3b4452" />映像</SideHead>
              <SideLink>AMI</SideLink>
              <Gap $h={10} />
              <SideHead><Triangle $s={5} $tall={7} $c="#3b4452" />Elastic Block Store</SideHead>
              <SideLink $cjk $h={28}>磁碟區</SideLink>
            </AwsSide>
            <SideScroll><Triangle $s={3.5} $c="#424955" /></SideScroll>
            <AwsMain>
              <ActionRow><Flask /><Refresh /><Gear /><Question bg="#9fa4ad" /></ActionRow>
              <FilterRow>
                <FilterBox><Question z={15} bg="#a2a7b0" /></FilterBox>
                <Stroke w={11} h={13} d="M1.500 1v11M9.500 1.500 4.500 6.500 9.500 11.500" c="#7c818a" s={1.6} />
                <Gap $w={13} />
                <Stroke w={7} h={13} d="M6 1.500 1.500 6.500 6 11.500" c="#7c818a" s={1.6} />
                <PageText>1 to 1 of 1</PageText>
                <Stroke w={7} h={13} d="M1 1.500 5.500 6.500 1 11.500" c="#7c818a" s={1.6} />
                <Gap $w={13} />
                <Stroke w={11} h={13} d="M1.500 1.500 6.500 6.500 1.500 11.500M9.500 1v11" c="#7c818a" s={1.6} />
              </FilterRow>
              <HeadRow>
                <HeadCell $w={154} $pl={15}>Public DNS (IPv4)<Triangle $c="#6d727b" $s={3} /></HeadCell>
                <HeadCell $w={122}>IPv4 Public IP<Triangle $c="#6d727b" $s={3} /></HeadCell>
                <HeadCell $w={38}>IPv6 IPs</HeadCell>
              </HeadRow>
              <DataRow>
                <DataCell $w={154} $right $pr={13}>3-21-102-98.us-ea…</DataCell>
                <DataCell $w={122}>3.21.102.98</DataCell>
                <DataCell $w={38}>-</DataCell>
              </DataRow>
              <GridBlank />
              <GridScroll><Triangle $right $c="#565b65" $s={4} /></GridScroll>
              <Detail>
                <DetailMain>
                  <PaneTools><PaneIcon $t={9} /><PaneIcon $t={7} /><PaneIcon $t={5} /></PaneTools>
                  <Columns>
                    <Column $w={480}>
                      {leftFields.map(([a, b]) => (
                        <Field key={a}><Label $w={201}><span>{a}</span></Label><Value>{b}</Value></Field>
                      ))}
                      <Field $h={14}><Label $w={201} /><Value $link>Learn more</Value></Field>
                      <Gap $h={2} />
                      <Field><Label $w={201}><span>Private DNS</span></Label><Value>ip-172-31</Value></Field>
                      <Field><Label $w={201}><span>Private IPs</span></Label><Value>172.31.2</Value></Field>
                      <Gap $h={16} />
                      <Field><Label $w={201}><span>Secondary private IPs</span></Label></Field>
                      <Field><Label $w={201}><span>VPC ID</span></Label><Value $link>vpc-4dc</Value></Field>
                      <Gap $h={16} />
                      <Field><Label $w={201}><span>Subnet ID</span></Label><Value $link>subnet-64e6e32e</Value></Field>
                    </Column>
                    <Column $w={600}>
                      <Field><EndText $w={540}>us-east-2.compute.amazonaws.com</EndText></Field>
                      <Gap $h={100} />
                      <Field><EndText $w={531} $link>view inbound rules. view outbound</EndText></Field>
                      <Gap $h={37} />
                      <Field $h={21}><EndText $w={539} $link>English-Full-Base-2020.07.15</EndText></Field>
                      <Field $h={13}><Label $w={252} /><Value $link>&nbsp;(ami-0587770c46124f677)</Value></Field>
                      <Gap $h={3} />
                      <Field><Label $w={252}><span>Platform details</span></Label><Value>&nbsp;Windows</Value></Field>
                    </Column>
                  </Columns>
                </DetailMain>
                <PaneScroll><Triangle $up $c="#6a6f78" $s={3.5} /><PaneThumb /><Triangle $c="#4c525c" $s={3.5} /></PaneScroll>
              </Detail>
            </AwsMain>
          </Console>
          <AwsFooter>
            <svg width="15" height="15" viewBox="0 0 15 15" fill="#a9aeb6"><ellipse cx="7.500" cy="6.500" rx="7.500" ry="6" /><path d="M8 10 13.500 14.500 13 9Z" /></svg>
            <FootStrong>意見回饋</FootStrong>
            <svg width="14" height="14" viewBox="0 0 14 14"><circle cx="7" cy="7" r="7" fill="#a9aeb6" /><path d="M2 3.500 6 2l1.500 2L5 6l1 2-1.500 3L2 7ZM9 6l4-1v4l-2.500 3L8.500 9ZM9 1.500 11 3 9 4Z" fill="#303b4b" /></svg>
            <FootStrong>中文(繁體)</FootStrong>
            <Grow />
            <Copyright>© 2008 - 2020, Amazon Web Services, Inc. 或其合作夥伴。保留所有權利。</Copyright>
            <FootLink $ml={17}>隱私權政策</FootLink>
            <FootLink $ml={22}>使用條款</FootLink>
          </AwsFooter>
          <Downloads>
            <DownloadItem><Doc w={10} h={13} /><span>20200728key.pem</span><Up c="#666" /></DownloadItem>
            <Grow />
            <ShowAll>全部顯示</ShowAll>
            <Cross z={9} c="#555" s={1.4} />
          </Downloads>
          <Taskbar>
            <StartCell><svg width="14" height="14" viewBox="0 0 14 14" fill="#fff"><path d="M0 2 6 1.200V6.600H0ZM6.700 1.100 14 0V6.600H6.700ZM0 7.300H6v5.500L0 12ZM6.700 7.300H14V14L6.700 12.900Z" /></svg></StartCell>
            {taskIcons.map(([icon, open, active], i) => (
              <Task key={i} $open={open} $active={active}><TaskIcon>{icon}</TaskIcon></Task>
            ))}
            <Tray>
              <Stroke w={12} h={8} d="M1 7 6 1.500 11 7" c="#eef1f5" />
              <Gap $w={8} />
              <Stroke w={15} h={12} d="M4 1h10v8H2V5M6 11.300h5M8.500 9v2.300M0 1h3v3H0" c="#eef1f5" s={1.1} />
              <Gap $w={6} />
              <Stroke w={15} h={12} d="M.5 4h2.500l2.500-2.500v9L3 8H.5ZM8 4q1.500 2 0 4M10 2.500q3 3.500 0 7M12.200 1q4 5 0 10" c="#eef1f5" s={1} />
              <Ime>中</Ime>
              <Clock>上午 10:18<br />2020/7/28</Clock>
              <NoticeBox>
                <svg width="14" height="14" viewBox="0 0 14 14"><path d="M0 0h14v11H7l-3 3v-3H0Z" fill="#fff" /><path d="M2 3h10M2 5.500h10M2 8h6" stroke="#1c2744" /></svg>
                <NoticeCount>1</NoticeCount>
              </NoticeBox>
              <ShowDesktop />
            </Tray>
          </Taskbar>
        </Browser>

        <Behind>
          <Piece $h={23} $bg="#e9e8e6" $f="11px" $i={1}>式</Piece>
          <Piece $h={60} $bg="#1e242e" />
          <Piece $h={44} />
          <Piece $h={3} $bg="#08080c" />
          <Piece $h={15} />
          <Piece $h={3} $bg="#08080c" />
          <Piece $h={4} />
          <Piece $h={3} $bg="#08080c" />
          <Piece $h={42} />
          <Piece $h={27} $f="bold 30px" $i={-10}>e</Piece>
          <Piece $h={2} $bg="#08080c" />
          <Piece $h={15} />
          <Piece $h={26} $c="#1b1bd0" $f="bold 22px" $i={-6}>a</Piece>
          <Piece $h={46} />
          <Piece $h={24} $c="#1818d8" $f="bold 26px" $i={-5}>T</Piece>
          <Piece $h={46} />
          <Piece $h={36} $f="26px" $i={-19}>需</Piece>
          <Piece $h={87} />
          <Piece $h={30} $bg="#2c2c2c" $c="#9a9a9a" $f="13px" $i={0}>C</Piece>
          <Piece $h={34} $bg="#222" />
          <Piece $h={26} $bg="#171717" $c="#ccc" $f="12px" $i={-1}>co</Piece>
          <Piece $h={162} $bg="#1b1b1b" />
        </Behind>

        <PasswordModal />
        <FileDialog />

        <Mark $x={139} $y={129} $w={142} $h={26} />
        <Mark $x={689} $y={346} $w={89} $h={44} />
        <Badge $x={668} $y={332}>1</Badge>
        <Badge $x={273} $y={109}>2</Badge>
        <Badge $x={888} $y={487}>3</Badge>
      </Desktop>
    </>
  );
}
